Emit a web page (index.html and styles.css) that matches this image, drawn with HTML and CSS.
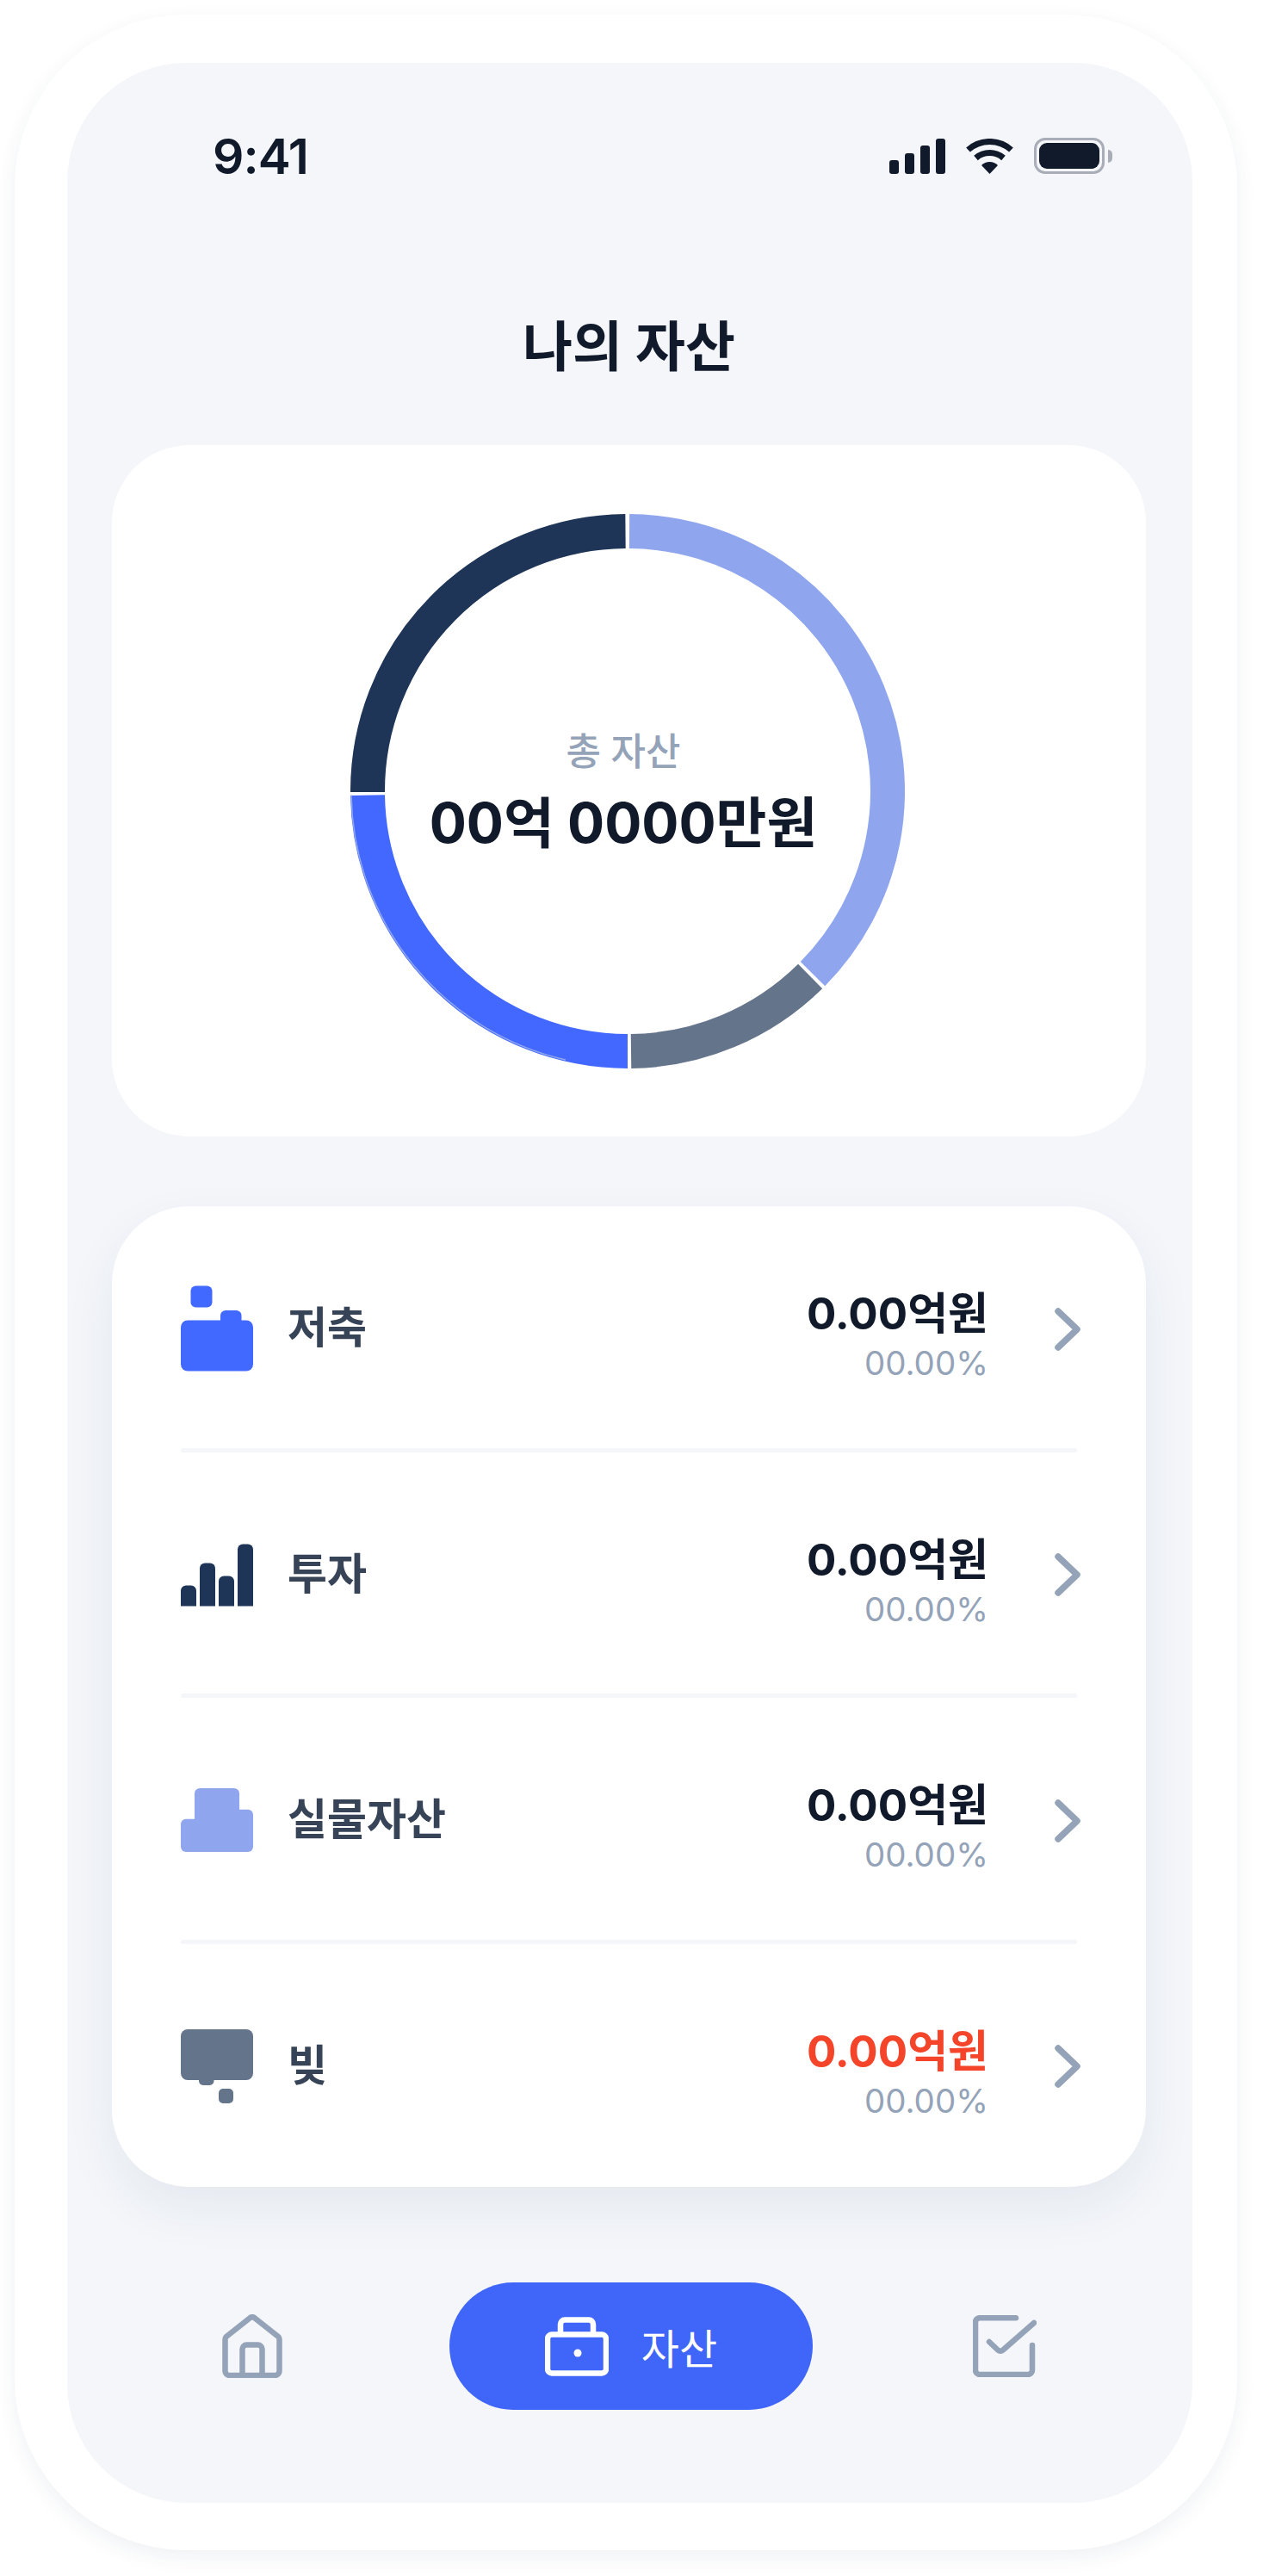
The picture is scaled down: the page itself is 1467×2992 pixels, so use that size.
FILE: index.html
```html
<!DOCTYPE html>
<html lang="ko">
<head>
<meta charset="utf-8">
<title>나의 자산</title>
<link rel="stylesheet" href="styles.css">
</head>
<body>
<div class="frame">
  <main class="screen">
    <header class="status">
      <span class="clock">9:41</span>
      <div class="status-icons">
        <div class="signal"><i class="s1"></i><i class="s2"></i><i class="s3"></i><i class="s4"></i></div>
        <svg class="wifi" width="57" height="41" viewBox="0 0 57 41"><path class="wifi-arc" d="M3.5 13A37.5 37.5 0 0 1 53.5 13"/><path class="wifi-arc" d="M12.5 22.5A24.5 24.5 0 0 1 44.5 22.5"/><path class="wifi-dot" d="M28.5 41L19 31A13.5 13.5 0 0 1 38 31Z"/></svg>
        <div class="battery"><div class="battery-shell"><div class="battery-fill"></div></div><div class="battery-nub"></div></div>
      </div>
    </header>

    <h1 class="title">나의 자산</h1>

    <section class="card donut-card">
      <div class="donut">
        <svg width="644" height="644" viewBox="0 0 644 644">
          <path class="seg seg-light" d="M324 20A302 302 0 0 1 537 534.1"/>
          <path class="seg seg-gray" d="M534.1 537A302 302 0 0 1 326 624"/>
          <path class="seg seg-blue" d="M322 624A302 302 0 0 1 20 326.6"/>
          <path class="seg-edge" d="M250 634A321 321 0 0 1 1 326.600"/>
          <path class="seg seg-navy" d="M20 323A302 302 0 0 1 319.5 20"/>
        </svg>
        <div class="donut-text">
          <div class="donut-label">총 자산</div>
          <div class="donut-value">00억 0000만원</div>
        </div>
      </div>
    </section>

    <section class="card list-card">
      <a class="row">
        <svg class="row-icon" width="84" height="104" viewBox="0 0 84 104"><g class="f-blue"><rect x="11.5" y="4.5" width="25" height="25" rx="6"/><rect x="46" y="33" width="24.5" height="20" rx="6"/><rect y="44.5" width="84" height="59" rx="8"/></g></svg>
        <span class="row-name">저축</span>
        <div class="row-values"><div class="amount">0.00억원</div><div class="percent">00.00%</div></div>
        <svg class="chev" width="30" height="50" viewBox="0 0 30 50"><path d="M4 4L26 25L4 46"/></svg>
      </a>
      <div class="sep"></div>
      <a class="row">
        <svg class="row-icon" width="84" height="104" viewBox="0 0 84 104"><g class="f-navy"><path d="M0 90.5V72.5a6 6 0 0 1 6-6h6a6 6 0 0 1 6 6v18Z"/><path d="M22 90.5V46.5a6 6 0 0 1 6-6h6a6 6 0 0 1 6 6v44Z"/><path d="M44 90.5V61.5a6 6 0 0 1 6-6h6a6 6 0 0 1 6 6v29Z"/><path d="M66 90.5V24.5a6 6 0 0 1 6-6h6a6 6 0 0 1 6 6v66Z"/></g></svg>
        <span class="row-name">투자</span>
        <div class="row-values"><div class="amount">0.00억원</div><div class="percent">00.00%</div></div>
        <svg class="chev" width="30" height="50" viewBox="0 0 30 50"><path d="M4 4L26 25L4 46"/></svg>
      </a>
      <div class="sep"></div>
      <a class="row">
        <svg class="row-icon" width="84" height="104" viewBox="0 0 84 104"><g class="f-light"><rect y="52.7" width="60" height="38.3" rx="6"/><rect x="44" y="41.7" width="40" height="49.3" rx="6"/><rect x="16" y="17" width="52" height="60" rx="6"/></g></svg>
        <span class="row-name">실물자산</span>
        <div class="row-values"><div class="amount">0.00억원</div><div class="percent">00.00%</div></div>
        <svg class="chev" width="30" height="50" viewBox="0 0 30 50"><path d="M4 4L26 25L4 46"/></svg>
      </a>
      <div class="sep"></div>
      <a class="row">
        <svg class="row-icon" width="84" height="104" viewBox="0 0 84 104"><g class="f-gray"><rect y="11" width="84" height="59" rx="8"/><rect x="21" y="60" width="17.5" height="16" rx="5"/><rect x="44" y="80" width="17" height="17" rx="5"/></g></svg>
        <span class="row-name">빚</span>
        <div class="row-values"><div class="amount debt">0.00억원</div><div class="percent">00.00%</div></div>
        <svg class="chev" width="30" height="50" viewBox="0 0 30 50"><path d="M4 4L26 25L4 46"/></svg>
      </a>
    </section>

    <nav class="nav">
      <svg class="nav-home" width="70" height="74" viewBox="0 0 70 74"><path d="M3.5 29a4 4 0 0 1 1-2.7L32 4.5a4 4 0 0 1 6 0L65.500 26.300a4 4 0 0 1 1 2.700V66a5 5 0 0 1-5 5H8.500a5 5 0 0 1-5-5Z"/><path d="M23.500 71V40.500a5 5 0 0 1 5-5H41.500a5 5 0 0 1 5 5V71"/></svg>
      <div class="nav-pill">
        <svg class="nav-case" width="74" height="69" viewBox="0 0 74 69"><path d="M8 20.500H66a5 5 0 0 1 5 5V60.500a5 5 0 0 1-5 5H8a5 5 0 0 1-5-5V25.500a5 5 0 0 1 5-5Z"/><path d="M18 20V8.500a5 5 0 0 1 5-5H51a5 5 0 0 1 5 5V20"/><circle class="case-dot" cx="38" cy="42" r="4.500"/></svg>
        <span class="nav-label">자산</span>
      </div>
      <svg class="nav-check" width="74" height="72" viewBox="0 0 74 72"><path d="M50 3.200H8a5 5 0 0 0-5 5V64a5 5 0 0 0 5 5H64a5 5 0 0 0 5-5V35"/><path d="M19 31L29 40.500Q32 43 35 40.500L71 9"/></svg>
    </nav>
  </main>
</div>
</body>
</html>
```

FILE: styles.css
```css
* { box-sizing: border-box; }
html, body { margin: 0; padding: 0; background: #fff; }
body {
  font-family: Inter, "Noto Sans CJK KR", sans-serif;
  color: #111a2b;
  padding: 17px 0 0 17px;
  width: 1467px;
  height: 2992px;
  overflow: hidden;
}
.frame {
  width: 1420px;
  height: 2945px;
  padding: 56px 52px 55px 61px;
  background: #fff;
  border-radius: 200px;
  box-shadow: 0 8px 24px rgba(30, 50, 90, .07);
}
.screen {
  width: 1307px;
  height: 2834px;
  padding: 0 54px 0 52px;
  background: #f4f6fa;
  border-radius: 138px;
}

.status {
  height: 216px;
  margin: 0 39px 0 117px;
  display: flex;
  align-items: center;
  justify-content: space-between;
}
.clock { font-size: 57px; font-weight: 600; letter-spacing: -1px; }
.status-icons { display: flex; align-items: center; gap: 23px; }
.signal { display: flex; align-items: flex-end; gap: 7px; height: 41px; }
.signal i { display: block; width: 11px; background: #111a2b; border-radius: 3px; }
.s1 { height: 16px; }
.s2 { height: 24px; }
.s3 { height: 33px; }
.s4 { height: 41px; }
.wifi-arc { fill: none; stroke: #111a2b; stroke-width: 7; }
.wifi-dot { fill: #111a2b; }
.battery { display: flex; align-items: center; gap: 4px; }
.battery-shell {
  width: 82px;
  height: 42px;
  padding: 3px;
  border: 3px solid #a9adb8;
  border-radius: 13px;
}
.battery-fill { width: 100%; height: 100%; background: #111a2b; border-radius: 9px; }
.battery-nub { width: 5px; height: 15px; background: #a9adb8; border-radius: 0 6px 6px 0; }

.title {
  height: 216px;
  margin: 0 0 12px;
  display: flex;
  align-items: center;
  justify-content: center;
  font-size: 63px;
  font-weight: 700;
}

.card { width: 1201px; background: #fff; border-radius: 90px; }
.donut-card {
  height: 803px;
  padding-right: 3px;
  display: flex;
  align-items: center;
  justify-content: center;
}
.donut { position: relative; width: 644px; height: 644px; }
.donut svg { display: block; }
.seg { fill: none; stroke-width: 40; }
.seg-light { stroke: #8fa6ee; }
.seg-gray { stroke: #64748b; }
.seg-blue { stroke: #4268ff; }
.seg-navy { stroke: #1e3557; }
.seg-edge { fill: none; stroke: #8fa6ee; stroke-width: 1.500; }
.donut-text {
  position: absolute;
  inset: 0;
  padding: 2px 10px 0 0;
  display: flex;
  flex-direction: column;
  align-items: center;
  justify-content: center;
}
.donut-label { font-size: 44px; font-weight: 500; line-height: 62px; color: #94a3b8; }
.donut-value { margin-top: 10px; font-size: 64px; font-weight: 700; line-height: 84px; color: #111a2b; }

.list-card {
  margin-top: 81px;
  height: 1139px;
  box-shadow: 0 24px 60px rgba(30, 50, 90, .07);
}
.row {
  height: 280.500px;
  padding: 0 76px 0 80px;
  display: flex;
  align-items: center;
}
.row-icon { flex: none; }
.row-name { margin: 0 0 6px 40px; font-size: 50px; font-weight: 700; color: #374357; }
.row-values { margin: 18px 0 0 auto; text-align: right; }
.amount { font-size: 51px; font-weight: 700; line-height: 62px; color: #111a2b; }
.amount.debt { color: #f4452b; }
.percent { margin-top: 4px; font-size: 38.500px; font-weight: 400; line-height: 44px; color: #94a3b8; }
.chev { flex: none; margin: 5px 0 0 77px; }
.chev path { fill: none; stroke: #94a3b8; stroke-width: 7.500; stroke-linecap: round; stroke-linejoin: round; }
.sep { height: 5px; margin: 0 80px; background: #f4f6fa; border-radius: 3px; }
.f-blue { fill: #4169ff; }
.f-navy { fill: #1e3557; }
.f-light { fill: #8fa6ee; }
.f-gray { fill: #64748b; }

.nav {
  margin: 111px 0 0 128px;
  display: flex;
  align-items: center;
}
.nav-home, .nav-check { flex: none; fill: none; stroke: #94a3b8; stroke-width: 6.500; stroke-linecap: round; stroke-linejoin: round; }
.nav-pill {
  width: 422px;
  height: 148px;
  margin: 0 186px 0 194px;
  display: flex;
  align-items: center;
  justify-content: center;
  gap: 38px;
  background: #3f66f8;
  border-radius: 74px;
}
.nav-case { flex: none; fill: none; stroke: #fff; stroke-width: 6.500; }
.case-dot { fill: #fff; stroke: none; }
.nav-label { font-size: 48px; font-weight: 400; color: #fff; }
```
